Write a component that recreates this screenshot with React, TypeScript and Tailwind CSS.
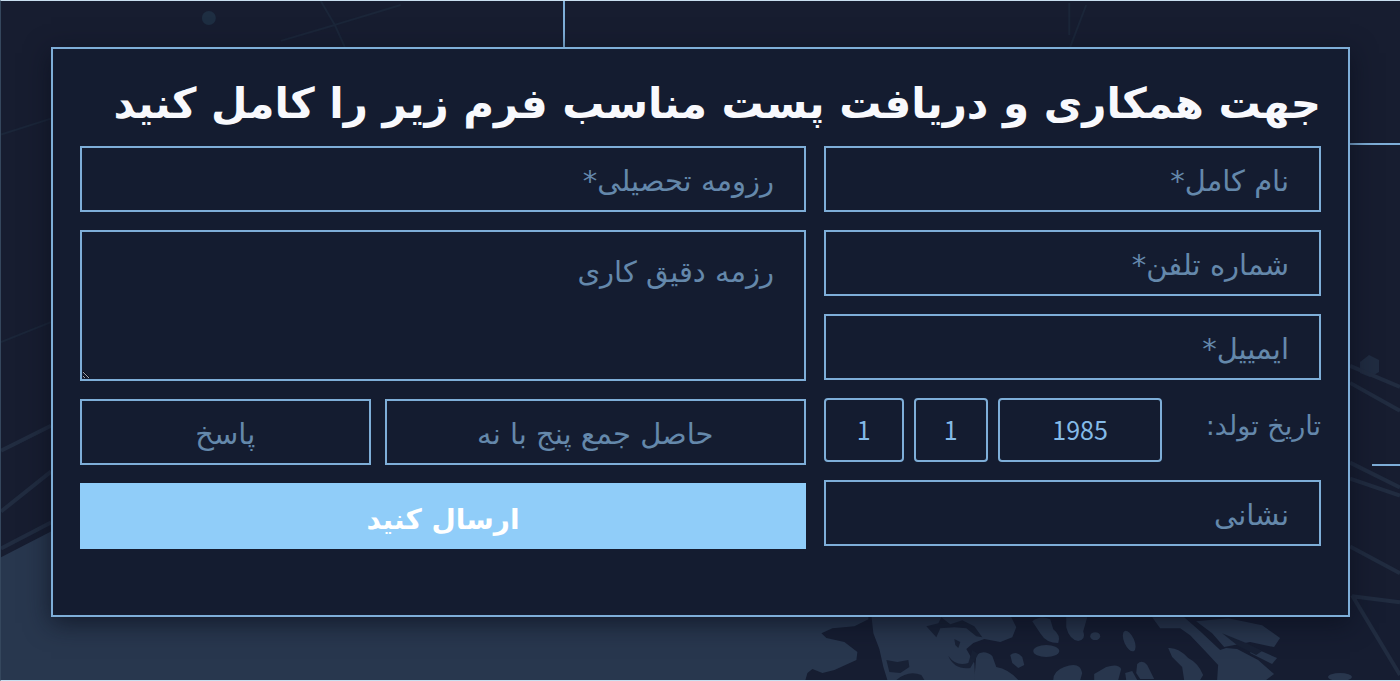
import { useState } from 'react';
import type { FormEvent } from 'react';
import clsx from 'clsx';

const field =
  'w-full border-2 border-[#7eaed8] bg-transparent px-[30px] text-[29px] leading-[56px] text-[#90cdf9] placeholder:text-[#6488ab] placeholder:opacity-100 outline-none focus:border-[#b5dcfa]';

const dateSelect =
  'h-16 appearance-none rounded-[4px] border-2 border-[#7eaed8] bg-[#141c30] text-center text-[25px] text-[#84bbe8] outline-none [text-align-last:center] font-["Noto_Sans_CJK_SC",sans-serif]';

const years = Array.from({ length: 60 }, (_, i) => 1950 + i);
const months = Array.from({ length: 12 }, (_, i) => i + 1);
const days = Array.from({ length: 31 }, (_, i) => i + 1);

type TextFieldProps = {
  name: string;
  placeholder: string;
  type?: string;
  className?: string;
};

function TextField({ name, placeholder, type = 'text', className }: TextFieldProps) {
  return (
    <input
      dir="rtl"
      type={type}
      name={name}
      placeholder={placeholder}
      aria-label={placeholder}
      className={clsx(field, 'h-[66px] pt-1', className)}
    />
  );
}

type DateSelectProps = {
  id?: string;
  label: string;
  options: number[];
  initial: number;
  className: string;
};

function DateSelect({ id, label, options, initial, className }: DateSelectProps) {
  const [value, setValue] = useState(initial);

  return (
    <select
      id={id}
      aria-label={label}
      value={value}
      onChange={(e) => setValue(Number(e.target.value))}
      className={clsx(dateSelect, className)}
    >
      {options.map((option) => (
        <option key={option} value={option}>
          {option}
        </option>
      ))}
    </select>
  );
}

// Faint network lines on the sides, hills and foliage along the bottom
function Backdrop() {
  return (
    <svg
      className="absolute inset-0 h-full w-full"
      viewBox="0 0 1400 681"
      preserveAspectRatio="none"
      aria-hidden="true"
    >
      <path d="M0 558 L50 532 L200 470 H780 L1000 616 H1090 L1040 681 H0Z" fill="#28374e" />
      <g fill="none" stroke="#1b2639" strokeWidth="2">
        <path d="M320 0 L334 24 L400 4M334 24 L280 40M334 24 L344 46M1086 4 L1070 46M1069 2 V34M0 134 L50 118M0 342 L50 322" />
      </g>
      <ellipse cx="208" cy="17" rx="7" ry="7" fill="#1e2e42" />
      <path d="M1360 362 L1369 355 L1379 360 V372 L1370 377 L1360 373Z" fill="#202c41" />

      {/* dark ground around the foliage */}
      <path
        d="M868 620 L854 627 L832 629 L821 634 L826 639 L844 643 L857 653 L856 661 L845 666 L834 671 L822 674 L812 670 L807 674 L805 681 H1400 V600 H868Z"
        fill="#161d31"
      />
      <g fill="#28364d">
        <path d="M871 616 L873 634 L879 650 L883 668 L887 681 H975 L974 664 L966 650 L973 644 L984 640 L1000 643 L1012 638 L1016 628 L1010 616Z" />
        <path d="M976 656 Q984 650 992 657 L996 668 Q1008 670 1018 681 H974Z" />
        <path d="M1032 622 Q1040 616 1050 620 L1053 630 Q1061 636 1058 644 Q1046 644 1040 634Z" />
        <path d="M1066 618 H1087 L1083 632 Q1086 640 1078 642 Q1069 640 1066 628Z" />
        <ellipse cx="1046" cy="652" rx="13" ry="6" />
        <path d="M1010 656 Q1016 651 1022 658 L1024 666 L1018 669 L1012 664Z" />
        <ellipse cx="1095" cy="637" rx="5" ry="4" />
        <ellipse cx="1129" cy="642" rx="5" ry="11" transform="rotate(-24 1129 642)" />
        <path d="M1053 681 Q1053 672 1064 668 Q1080 662 1082 674 L1080 681Z" />
        <path d="M1094 681 V675 L1106 668 Q1118 664 1121 670 L1118 681Z" />
        <path d="M1126 681 L1125 674 L1132 672 L1137 681Z" />
        <path d="M1137 665 Q1142 660 1147 666 L1154 680 H1140 L1136 674Z" />
        <path d="M1168 649 Q1178 648 1188 659 Q1198 664 1203 676 L1200 681 H1184 L1182 668 L1172 658Z" />
        <path d="M1152 618 H1184 L1200 632 L1220 651 L1226 649 L1237 650 L1258 661 L1274 675 L1266 681 H1217 L1218 666 L1205 652 L1190 636 L1180 629 H1160Z" />
        <path d="M1196 622 L1228 619 L1262 626 L1280 639 L1274 648 L1250 643 L1224 648 L1212 634Z" />
        <path d="M1252 648 L1277 659 L1272 665 L1250 654Z" />
        <ellipse cx="1340" cy="678" rx="12" ry="4" />
      </g>
      <g fill="#182135">
        <path d="M926 627 L938 624 L941 618 L950 625 L962 621 L974 627 L982 638 L976 637 L966 629 L954 628 L940 629 L936 638Z" />
        <path d="M886 661 L897 663 L908 661 L909 668 L900 674 L889 673Z" />
        <path d="M954 640 L960 643 L958 649 L955 646Z" />
        <path d="M948 657 Q956 668 968 664 L972 651 L978 655 L970 669 Q954 671 948 657Z" />
        <path d="M896 681 Q908 671 921 676 L924 681Z" />
        <path d="M1222 634 L1246 644 L1262 652 L1256 656 L1238 647Z" />
      </g>
      <g fill="none" stroke="#212c40" strokeWidth="4">
        <path d="M0 451 L50 426M0 512 L50 472M0 549 L50 523" />
        <path d="M1350 366 L1400 387M1350 383 L1400 411M1350 463 L1400 488M1350 479 L1400 496M1350 547 L1400 574M1352 596 L1400 676M1352 597 L1400 603" />
      </g>
    </svg>
  );
}

export default function App() {
  const [sent, setSent] = useState(false);

  const handleSubmit = (e: FormEvent) => {
    e.preventDefault();
    setSent(true);
  };

  return (
    <main
      dir="rtl"
      lang="fa"
      className='relative min-h-screen overflow-hidden border-y border-y-[#c9dff0] border-l border-l-[#35475d] bg-[#171d30] pt-[46px] pb-[62px] pl-[50px] pr-[50px] font-["DejaVu_Sans",sans-serif]'
    >
      <Backdrop />

      {/* Connector lines running out of the card */}
      <span className="absolute top-0 left-[40.2%] h-12 w-[2px] bg-[#7eaed8]" />
      <span className="absolute top-[142px] right-0 h-[2px] w-[50px] bg-[#7eaed8]" />
      <span className="absolute top-[463px] right-0 h-[2px] w-7 bg-[#7eaed8]" />

      <section className="relative border-2 border-[#7eaed8] bg-[#141c30] px-[27px] pt-6 pb-[66px] shadow-[0_6px_24px_rgba(10,14,28,0.7)]">
        <h1 className="h-[73px] text-[42px] leading-[62px] font-bold whitespace-nowrap text-[#f8f9fd]">
          جهت همکاری و دریافت پست مناسب فرم زیر را کامل کنید
        </h1>

        <form onSubmit={handleSubmit} className="grid grid-cols-[497fr_726fr] items-start gap-[18px]">
          {/* Personal details */}
          <div className="flex flex-col gap-[18px]">
            <TextField name="name" placeholder="نام کامل*" />
            <TextField name="phone" type="tel" placeholder="شماره تلفن*" />
            <TextField name="email" type="email" placeholder="ایمییل*" />
            <div className="flex gap-[10px]">
              <label htmlFor="birth-year" className="flex-1 pt-1 text-[27px] leading-[48px] whitespace-nowrap text-[#6488ab]">
                تاریخ تولد:
              </label>
              <DateSelect id="birth-year" label="سال" options={years} initial={1985} className="w-[33%]" />
              <DateSelect label="ماه" options={months} initial={1} className="w-[15%]" />
              <DateSelect label="روز" options={days} initial={1} className="w-[16%]" />
            </div>
            <TextField name="address" placeholder="نشانی" />
          </div>

          {/* Resume, captcha question and submit */}
          <div className="flex flex-col gap-[18px]">
            <TextField name="education" placeholder="رزومه تحصیلی*" />
            <textarea
              name="experience"
              placeholder="رزمه دقیق کاری"
              aria-label="رزمه دقیق کاری"
              className={clsx(field, 'block h-[151px] pt-3')}
            />
            <div className="grid grid-cols-[422fr_291fr] gap-[14px]">
              <TextField name="question" placeholder="حاصل جمع پنج با نه" className="text-center" />
              <TextField name="answer" placeholder="پاسخ" className="text-center" />
            </div>
            <button
              type="submit"
              disabled={sent}
              className="h-[66px] bg-[#90cdf9] pt-2 text-[28px] font-bold text-white"
            >
              ارسال کنید
            </button>
          </div>
        </form>
      </section>
    </main>
  );
}
